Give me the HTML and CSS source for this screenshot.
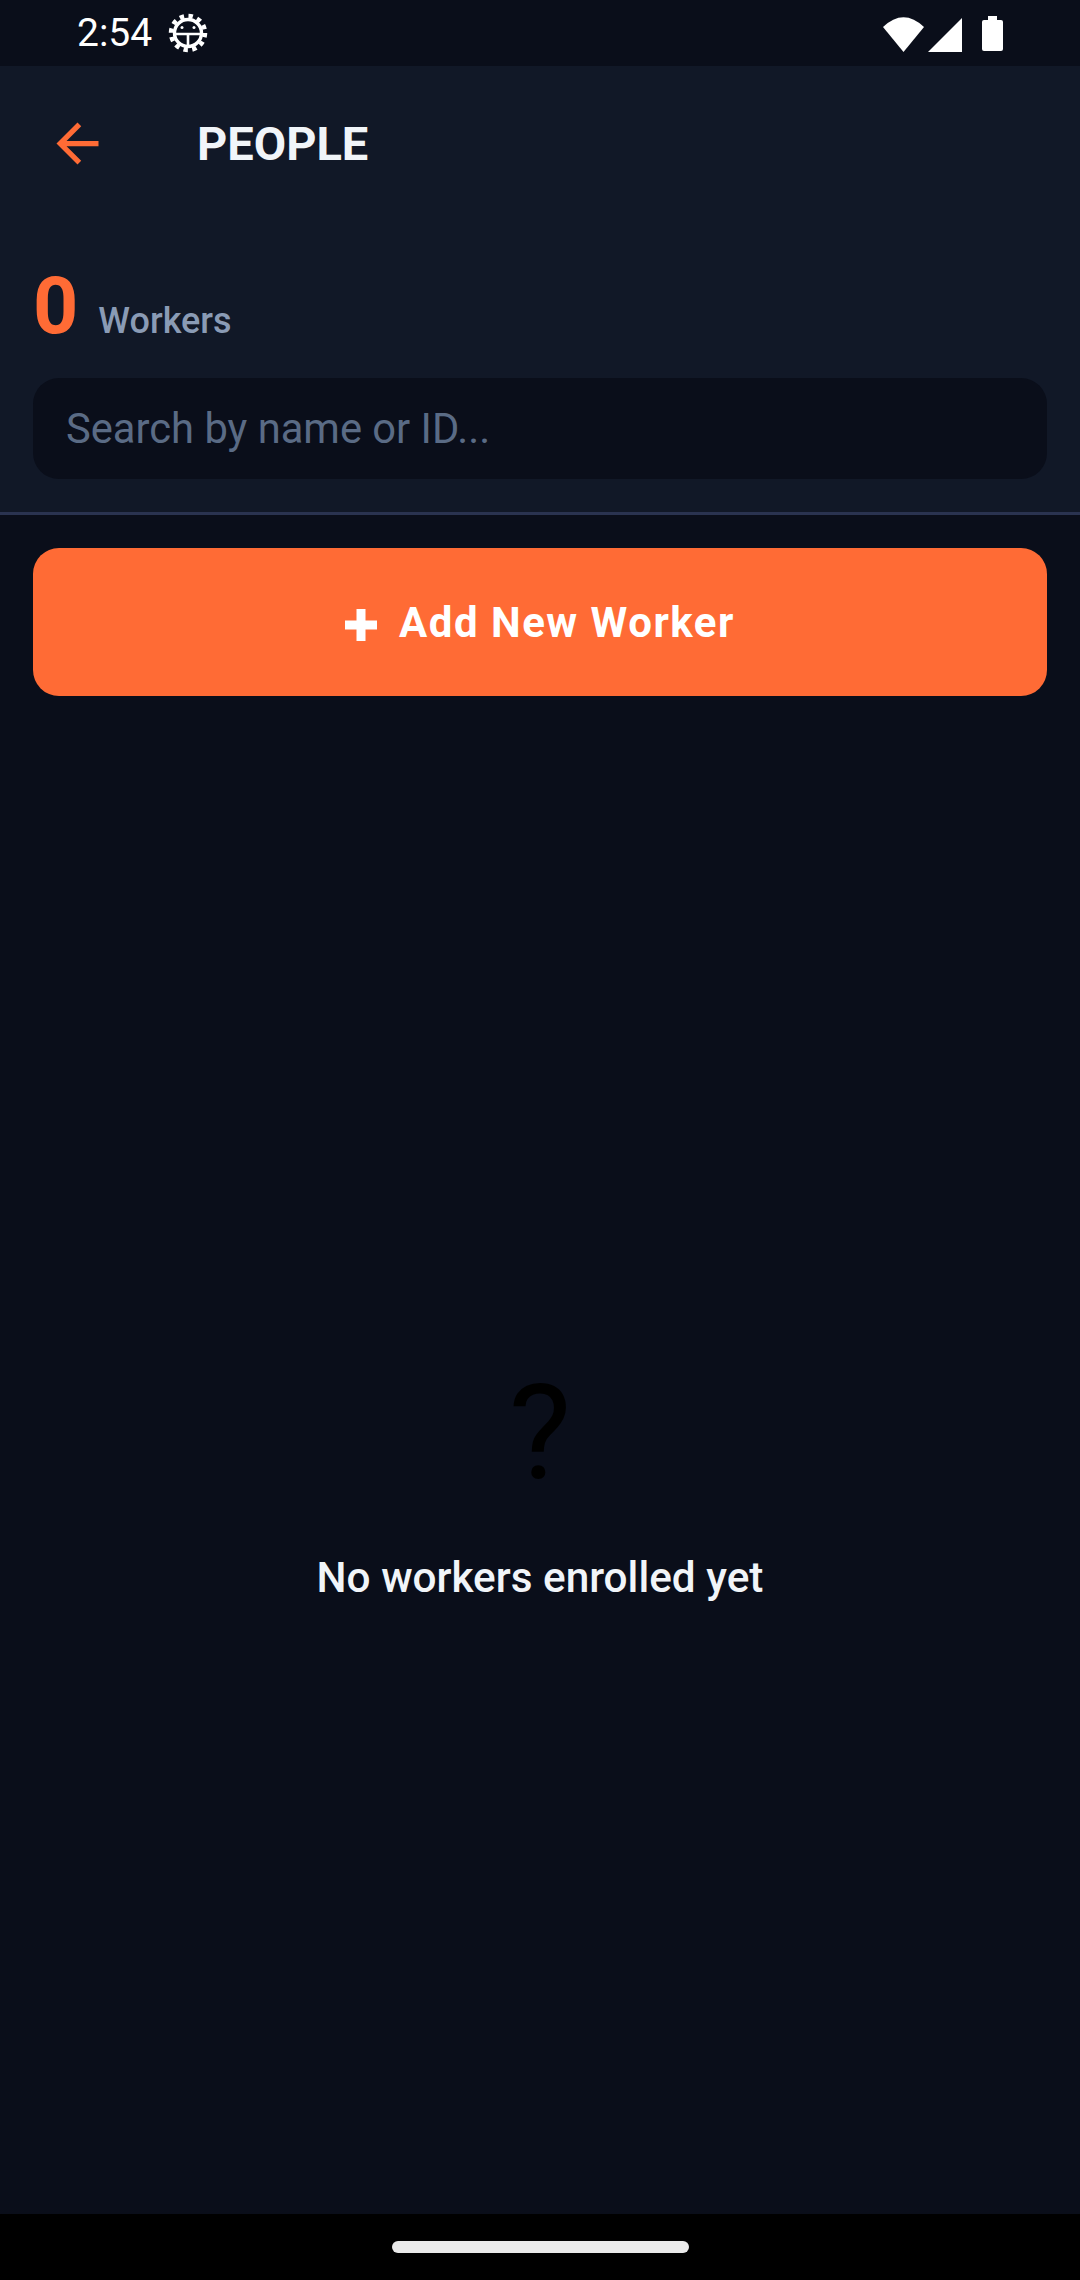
FILE: index.html
```html
<!DOCTYPE html>
<html lang="en">
<head>
    <meta charset="UTF-8">
    <meta name="viewport" content="width=device-width, initial-scale=1.0">
    <title>People</title>
    <link rel="stylesheet" href="styles.css">
</head>
<body>
    <div class="status-bar">
        <div class="status-left">
            <span class="clock">2:54</span>
            <svg class="gear" width="40" height="40" viewBox="0 0 40 40">
                <circle cx="20" cy="20" r="17" fill="none" stroke="#fff" stroke-width="4.5" stroke-dasharray="4.4 4.5"/>
                <circle cx="20" cy="20" r="13.5" fill="none" stroke="#fff" stroke-width="3.4"/>
                <path d="M7 21H33M20 21V34" fill="none" stroke="#fff" stroke-width="2.6"/>
                <circle cx="14" cy="14.5" r="1.5" fill="#fff"/>
                <circle cx="26" cy="14.5" r="1.5" fill="#fff"/>
            </svg>
        </div>
        <div class="status-right">
            <svg width="41" height="35" viewBox="0 0 41 35">
                <path d="M0 10Q20.500 -9.500 41 10L20.500 35Z" fill="#fff"/>
            </svg>
            <svg width="34" height="35" viewBox="0 0 34 35">
                <path d="M34 1V35H0Z" fill="#fff"/>
            </svg>
            <div class="battery"></div>
        </div>
    </div>

    <div class="header">
        <div class="topbar">
            <svg class="back-icon" width="63" height="63" viewBox="0 0 24 24">
                <path d="M20 11H7.830l5.590-5.590L12 4l-8 8 8 8 1.410-1.410L7.830 13H20v-2z" fill="#ff6b35"/>
            </svg>
            <h1 class="title">PEOPLE</h1>
        </div>
        <div class="count-row">
            <span class="count">0</span>
            <span class="count-label">Workers</span>
        </div>
        <div class="search">Search by name or ID...</div>
    </div>

    <div class="content">
        <button class="add-btn">
            <svg class="add-icon" width="32" height="32" viewBox="0 0 32 32">
                <path d="M11.500 0H20.500V11.500H32V20.500H20.500V32H11.500V20.500H0V11.500H11.500Z" fill="#fff"/>
            </svg>
            <span>Add New Worker</span>
        </button>
        <div class="empty">
            <div class="empty-icon">?</div>
            <div class="empty-text">No workers enrolled yet</div>
        </div>
    </div>

    <div class="nav-bar">
        <div class="home-pill"></div>
    </div>
</body>
</html>
```

FILE: styles.css
```css
body {
    font-family: Roboto, sans-serif;
    margin: 0;
    height: 2280px;
    overflow: hidden;
    display: flex;
    flex-direction: column;
    background-color: #0a0e1a;
    color: #f1f5f9;
}

.status-bar {
    height: 66px;
    flex-shrink: 0;
    display: flex;
    justify-content: space-between;
    align-items: center;
    padding: 0 77px 0 77px;
}

.status-left {
    display: flex;
    align-items: center;
    gap: 16px;
}

.clock {
    font-size: 39px;
    color: #fff;
}

.status-right {
    display: flex;
    align-items: flex-end;
    gap: 4px;
    margin-top: 2px;
}

.battery {
    position: relative;
    width: 21px;
    height: 31px;
    margin: 0 0 1px 16px;
    background: #fff;
    border-radius: 2px;
}

.battery::before {
    content: '';
    position: absolute;
    top: -4px;
    left: 6px;
    width: 9px;
    height: 4px;
    background: #fff;
}

.header {
    background: #111827;
    border-bottom: 3px solid #2a3350;
    padding-bottom: 33px;
}

.topbar {
    height: 155px;
    display: flex;
    align-items: center;
    gap: 88px;
    padding-left: 46px;
}

.title {
    margin: 0;
    font-size: 47px;
    font-weight: 700;
    color: #f1f5f9;
}

.count-row {
    display: flex;
    align-items: baseline;
    gap: 20px;
    height: 118px;
    padding: 0 33px;
    margin-top: 39px;
}

.count {
    font-size: 79px;
    font-weight: 700;
    color: #ff6b35;
}

.count-label {
    font-size: 36px;
    font-weight: 500;
    color: #8a9bb5;
}

.search {
    height: 101px;
    margin: 0 33px;
    padding-left: 33px;
    display: flex;
    align-items: center;
    font-size: 41.700px;
    color: #5a6b85;
    background: #0a0e1a;
    border-radius: 26px;
}

.content {
    flex: 1;
    padding: 33px;
    display: flex;
    flex-direction: column;
}

.add-btn {
    height: 148px;
    flex-shrink: 0;
    display: flex;
    justify-content: center;
    align-items: center;
    gap: 22px;
    border: none;
    border-radius: 26px;
    background: #ff6b35;
    color: #fff;
    font-family: Roboto, sans-serif;
    font-size: 42px;
    font-weight: 700;
    letter-spacing: 1.500px;
}

.add-icon {
    margin-top: 6px;
}

.empty {
    display: flex;
    flex-direction: column;
    align-items: center;
    margin-top: 660px;
}

.empty-icon {
    font-size: 132px;
    line-height: 155px;
    color: #000;
}

.empty-text {
    margin-top: 42px;
    font-size: 42.300px;
    font-weight: 500;
    color: #f1f5f9;
}

.nav-bar {
    height: 66px;
    flex-shrink: 0;
    display: flex;
    justify-content: center;
    align-items: center;
    background: #000;
}

.home-pill {
    width: 297px;
    height: 12px;
    border-radius: 6px;
    background: #eaeaea;
}
```
